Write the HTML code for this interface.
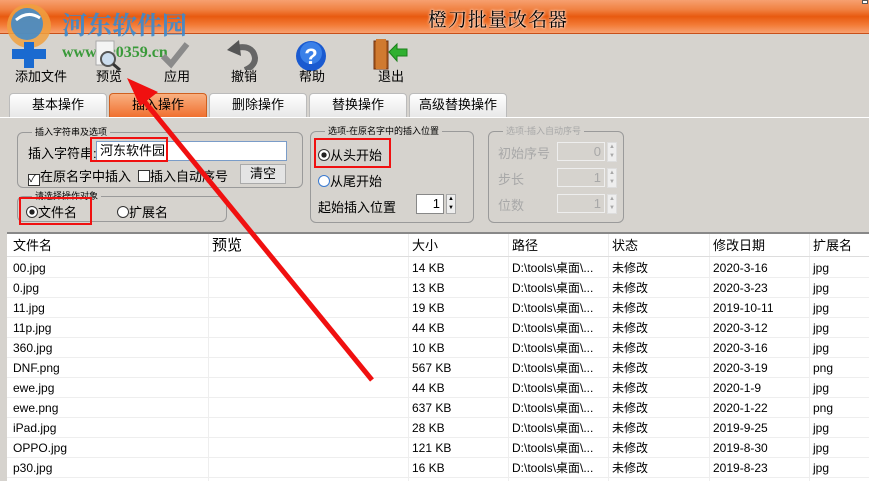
<!DOCTYPE html>
<html><head><meta charset="utf-8"><style>
*{margin:0;padding:0;box-sizing:border-box}
body{width:869px;height:481px;overflow:hidden;background:#d6d3ce;font-family:"Liberation Sans","Noto Sans CJK SC",sans-serif;font-size:12px;color:#000;position:relative}
.abs{position:absolute}
#title{left:0;top:0;width:869px;height:34px;background:linear-gradient(#f7a070 0%,#f08040 30%,#e85a10 50%,#f27a35 75%,#f8a070 100%);border-bottom:1px solid #c8501a}
#title span{position:absolute;left:428px;top:5px;font-size:19px;color:#000;text-shadow:0 0 3px #fff,0 0 2px #fff;letter-spacing:1px;font-family:"Noto Serif CJK SC",serif}
.tb{font-size:13px}
.tab{position:absolute;top:93px;height:24px;width:98px;border:1px solid #bbb;border-bottom:none;border-radius:4px 4px 0 0;background:linear-gradient(#fff,#e8e8e8);text-align:center;line-height:22px;font-size:13px}
.tab.on{background:linear-gradient(#f9b080,#f07030);border-color:#d06020}
.grp{position:absolute;border:1px solid #9a9a9a;border-radius:6px}
.grp .lg{position:absolute;top:-7px;left:14px;background:#d6d3ce;padding:0 3px;font-size:9px;line-height:12px}
.red{position:absolute;border:2px solid #f01010}
.inp{position:absolute;background:#fff;border:1px solid #7a9cc8}
.spin{position:absolute;background:#fff;border:1px solid #888;text-align:right;padding-right:3px;font-size:13px;line-height:18px}
.sb{position:absolute;width:10px;height:20px;border:1px solid #aaa;background:#eee;font-size:6px;line-height:9px;text-align:center}
.dis{color:#a8a8a8}
.dis .spin{background:#d6d3ce;color:#a8a8a8;border-color:#eee}
#list{position:absolute;left:7px;top:232px;width:862px;height:249px;background:#fff;border-top:2px solid #888}
.row{position:absolute;left:0;width:862px;height:20px;border-bottom:1px solid #eee;font-size:12px;line-height:20px}
.row span{position:absolute;top:0}
.vl{position:absolute;top:0;bottom:0;width:1px;background:#eee}
</style></head><body>
<div id="title" class="abs"><span>橙刀批量改名器</span></div>
<div class="abs" style="left:862px;top:0;width:6px;height:4px;background:#fff;border:1px solid #555"></div>
<!-- watermark logo -->
<svg class="abs" style="left:2px;top:2px" width="56" height="66" viewBox="0 0 56 66"><circle cx="27" cy="24" r="22" fill="#f0a040" opacity=".85"/><circle cx="25" cy="22" r="16" fill="#3a8ad0" opacity=".85"/><path d="M14 18 q12 -10 24 -2" stroke="#fff" stroke-width="3" fill="none"/><rect x="22" y="40" width="10" height="26" fill="#1a6ad0"/><rect x="10" y="47" width="34" height="10" fill="#1a6ad0"/></svg>
<div class="abs" style="left:62px;top:6px;font-size:25px;font-weight:bold;color:#3a8ad0;font-family:'Noto Serif CJK SC',serif;opacity:.9">河东软件园</div>
<div class="abs" style="left:62px;top:44px;font-size:16px;font-weight:bold;color:#3a9a3a;font-family:'Liberation Serif',serif">www.pc0359.cn</div>
<!-- toolbar icons -->
<svg class="abs" style="left:93px;top:40px" width="30" height="32"><rect x="3" y="1" width="18" height="24" fill="#f4f4f4" stroke="#aaa"/><circle cx="15" cy="19" r="7" fill="#cde" stroke="#555" stroke-width="2"/><line x1="20" y1="24" x2="27" y2="30" stroke="#333" stroke-width="3"/></svg>
<svg class="abs" style="left:160px;top:40px" width="30" height="30"><path d="M3 16 l8 8 l16 -20" stroke="#8a8a8a" stroke-width="6" fill="none"/></svg>
<svg class="abs" style="left:225px;top:38px" width="36" height="32"><path d="M10 10 q18 -4 20 10 q0 8 -10 12" stroke="#666" stroke-width="6" fill="none"/><path d="M2 12 l12 -10 l2 16 z" fill="#555"/></svg>
<svg class="abs" style="left:295px;top:40px" width="32" height="32"><circle cx="16" cy="16" r="15" fill="#1a5ad0"/><circle cx="16" cy="13" r="11" fill="#3a80e8"/><text x="16" y="24" font-size="22" font-weight="bold" fill="#fff" text-anchor="middle" font-family="Liberation Sans">?</text></svg>
<svg class="abs" style="left:373px;top:38px" width="36" height="32"><rect x="1" y="3" width="14" height="28" fill="#b06020" stroke="#703010"/><rect x="3" y="1" width="10" height="30" fill="#d07a30"/><path d="M16 14 l8 -8 v5 h10 v7 h-10 v5 z" fill="#30b030" stroke="#1a801a"/></svg>
<div class="abs tb" style="left:15px;top:66px">添加文件</div>
<div class="abs tb" style="left:96px;top:66px">预览</div>
<div class="abs tb" style="left:164px;top:66px">应用</div>
<div class="abs tb" style="left:231px;top:66px">撤销</div>
<div class="abs tb" style="left:299px;top:66px">帮助</div>
<div class="abs tb" style="left:378px;top:66px">退出</div>
<!-- tabs -->
<div class="tab" style="left:9px">基本操作</div>
<div class="tab on" style="left:109px">插入操作</div>
<div class="tab" style="left:209px">删除操作</div>
<div class="tab" style="left:309px">替换操作</div>
<div class="tab" style="left:409px">高级替换操作</div>
<div class="abs" style="left:0;top:117px;width:869px;height:1px;background:#fff"></div>
<!-- groups -->
<div class="grp" style="left:17px;top:132px;width:286px;height:56px"><span class="lg">插入字符串及选项</span></div>
<div class="abs" style="left:28px;top:143px;font-size:13px">插入字符串:</div>
<div class="inp" style="left:96px;top:141px;width:191px;height:20px;font-size:13px;padding-left:3px;line-height:18px">河东软件园</div>
<div class="abs" style="left:28px;top:166px;font-size:13px"><span style="display:inline-block;width:12px;height:12px;border:1px solid #333;background:#fff;vertical-align:-1px;font-size:10px;line-height:10px">✓</span>在原名字中插入</div>
<div class="abs" style="left:138px;top:166px;font-size:13px"><span style="display:inline-block;width:12px;height:12px;border:1px solid #333;background:#fff;vertical-align:-1px"></span>插入自动序号</div>
<div class="abs" style="left:240px;top:164px;width:46px;height:20px;border:1px solid #aaa;background:#e4e4e4;text-align:center;line-height:18px;font-size:13px">清空</div>
<div class="grp" style="left:17px;top:196px;width:210px;height:26px"><span class="lg">请选择操作对象</span></div>
<div class="abs" style="left:26px;top:202px;font-size:13px"><span style="display:inline-block;width:12px;height:12px;border-radius:50%;border:1px solid #333;background:radial-gradient(#222 35%,#fff 40%);vertical-align:-1px"></span>文件名</div>
<div class="abs" style="left:117px;top:202px;font-size:13px"><span style="display:inline-block;width:12px;height:12px;border-radius:50%;border:1px solid #333;background:#fff;vertical-align:-1px"></span>扩展名</div>
<div class="grp" style="left:310px;top:131px;width:164px;height:92px"><span class="lg">选项-在原名字中的插入位置</span></div>
<div class="abs" style="left:318px;top:145px;font-size:13px"><span style="display:inline-block;width:12px;height:12px;border-radius:50%;border:1px solid #333;background:radial-gradient(#222 35%,#fff 40%);vertical-align:-1px"></span>从头开始</div>
<div class="abs" style="left:318px;top:171px;font-size:13px"><span style="display:inline-block;width:12px;height:12px;border-radius:50%;border:1px solid #3a7ad0;background:#fff;vertical-align:-1px"></span>从尾开始</div>
<div class="abs" style="left:318px;top:197px;font-size:13px">起始插入位置</div>
<div class="spin" style="left:416px;top:194px;width:28px;height:20px">1</div>
<div class="sb" style="left:446px;top:194px">▲<br>▼</div>
<div class="grp dis" style="left:488px;top:131px;width:136px;height:92px"><span class="lg">选项-插入自动序号</span>
<div class="abs" style="left:9px;top:11px;font-size:13px">初始序号</div>
<div class="spin" style="left:68px;top:10px;width:48px;height:19px">0</div>
<div class="abs" style="left:9px;top:37px;font-size:13px">步长</div>
<div class="spin" style="left:68px;top:36px;width:48px;height:19px">1</div>
<div class="abs" style="left:9px;top:63px;font-size:13px">位数</div>
<div class="spin" style="left:68px;top:62px;width:48px;height:19px">1</div>
<div class="sb" style="left:118px;top:10px;border-color:#ddd">▲<br>▼</div>
<div class="sb" style="left:118px;top:36px;border-color:#ddd">▲<br>▼</div>
<div class="sb" style="left:118px;top:62px;border-color:#ddd">▲<br>▼</div>
</div>
<!-- red boxes -->
<div class="red" style="left:90px;top:137px;width:78px;height:25px"></div>
<div class="red" style="left:19px;top:197px;width:73px;height:28px"></div>
<div class="red" style="left:314px;top:138px;width:77px;height:30px"></div>
<!-- list -->
<div id="list">
<div class="vl" style="left:201px;top:0"></div><div class="vl" style="left:401px"></div><div class="vl" style="left:501px"></div><div class="vl" style="left:601px"></div><div class="vl" style="left:702px"></div><div class="vl" style="left:802px"></div>
<div class="row" style="top:0;height:23px;line-height:23px;font-size:13px;border-bottom:1px solid #ddd"><span style="left:6px">文件名</span><span style="left:205px;font-size:15px">预览</span><span style="left:405px">大小</span><span style="left:505px">路径</span><span style="left:605px">状态</span><span style="left:706px">修改日期</span><span style="left:806px">扩展名</span></div>
</div>
<div id="rows"></div>
<script>
var d=[["00.jpg","14 KB","2020-3-16","jpg"],["0.jpg","13 KB","2020-3-23","jpg"],["11.jpg","19 KB","2019-10-11","jpg"],["11p.jpg","44 KB","2020-3-12","jpg"],["360.jpg","10 KB","2020-3-16","jpg"],["DNF.png","567 KB","2020-3-19","png"],["ewe.jpg","44 KB","2020-1-9","jpg"],["ewe.png","637 KB","2020-1-22","png"],["iPad.jpg","28 KB","2019-9-25","jpg"],["OPPO.jpg","121 KB","2019-8-30","jpg"],["p30.jpg","16 KB","2019-8-23","jpg"]];
var h="";d.forEach(function(r,i){h+='<div class="row" style="top:'+(24+i*20)+'px"><span style="left:6px">'+r[0]+'</span><span style="left:405px">'+r[1]+'</span><span style="left:505px">D:\\tools\\桌面\\...</span><span style="left:605px">未修改</span><span style="left:706px">'+r[2]+'</span><span style="left:806px">'+r[3]+'</span></div>';});
document.getElementById("list").insertAdjacentHTML("beforeend",h);
</script>
<!-- red arrow -->
<svg class="abs" style="left:0;top:0" width="869" height="481"><line x1="372" y1="380" x2="140" y2="96" stroke="#f01010" stroke-width="5"/><polygon points="127,78 158,92 140,106" fill="#f01010"/></svg>
</body></html>
